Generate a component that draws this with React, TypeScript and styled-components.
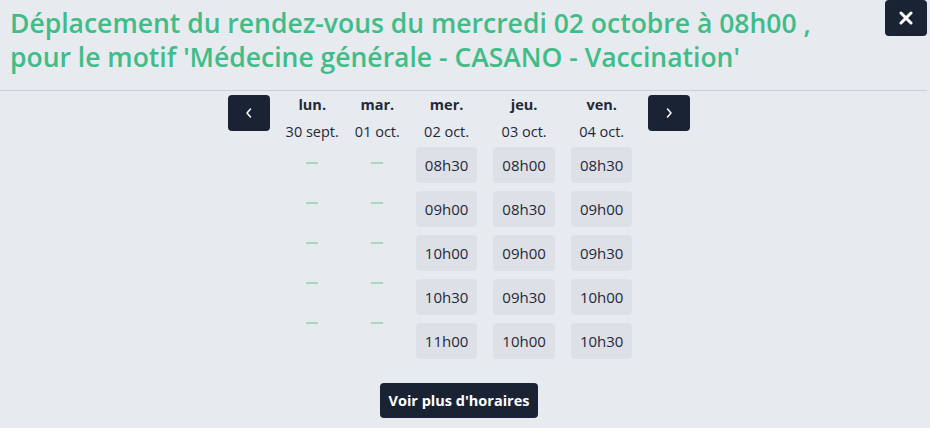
import React from "react";
import styled, { createGlobalStyle } from "styled-components";

const GlobalStyle = createGlobalStyle`
  html, body {
    margin: 0;
    padding: 0;
    background: #e7eaef;
  }
  body {
    font-family: "Open Sans", "Noto Sans", sans-serif;
    color: #1f2937;
  }
`;

const Page = styled.div`
  width: 930px;
  height: 428px;
  overflow: hidden;
  background: #e7eaef;
`;

const Header = styled.div`
  display: flex;
  justify-content: space-between;
  align-items: flex-start;
  height: 91px;
  width: 927px;
  border-bottom: 1px solid #c9ced7;
  box-sizing: border-box;
  padding-left: 10px;
`;

const Title = styled.h2`
  margin: 0;
  padding-top: 6px;
  font-size: 26.5px;
  line-height: 34px;
  font-weight: 600;
  color: #3fbd88;
  letter-spacing: 0;
`;

const DarkButton = styled.button`
  width: 42px;
  height: 36px;
  border: none;
  border-radius: 4px;
  background: #1a2334;
  color: #ffffff;
  display: flex;
  align-items: center;
  justify-content: center;
  padding: 0;
  cursor: pointer;
  flex-shrink: 0;
`;

const Body = styled.div`
  width: 918px;
  display: flex;
  flex-direction: column;
  align-items: center;
  padding-top: 4px;
`;

const Week = styled.div`
  display: flex;
  align-items: flex-start;
  gap: 16px;
`;

const Day = styled.div`
  display: flex;
  flex-direction: column;
  align-items: center;
`;

const DayName = styled.div`
  font-size: 14.5px;
  line-height: 20px;
  font-weight: 700;
  color: #1f2937;
`;

const DayDate = styled.div`
  font-size: 14.5px;
  line-height: 22px;
  margin-top: 6px;
  color: #1f2937;
  white-space: nowrap;
`;

const Slots = styled.div`
  display: flex;
  flex-direction: column;
  align-items: center;
  gap: 8px;
  margin-top: 4px;
`;

const Slot = styled.button`
  height: 36px;
  padding: 0 9px;
  border: none;
  border-radius: 4px;
  background: #dde0e6;
  font-family: "Open Sans", "Noto Sans", sans-serif;
  font-size: 15px;
  color: #1f2937;
  cursor: pointer;
`;

const Empty = styled.div`
  height: 32px;
  display: flex;
  align-items: center;
  &::after {
    content: "";
    width: 12px;
    height: 2px;
    background: #a3d9bf;
  }
`;

const More = styled.button`
  margin-top: 24px;
  height: 35px;
  padding: 0 9px;
  border: none;
  border-radius: 4px;
  background: #1a2334;
  color: #ffffff;
  font-family: "Open Sans", "Noto Sans", sans-serif;
  font-size: 14.5px;
  font-weight: 700;
  cursor: pointer;
`;

const days = [
  { name: "lun.", date: "30 sept.", slots: [] as string[] },
  { name: "mar.", date: "01 oct.", slots: [] as string[] },
  { name: "mer.", date: "02 oct.", slots: ["08h30", "09h00", "10h00", "10h30", "11h00"] },
  { name: "jeu.", date: "03 oct.", slots: ["08h00", "08h30", "09h00", "09h30", "10h00"] },
  { name: "ven.", date: "04 oct.", slots: ["08h30", "09h00", "09h30", "10h00", "10h30"] },
];

const Chevron = ({ dir }: { dir: "left" | "right" }) => (
  <svg width="12" height="12" viewBox="0 0 12 12" fill="none">
    <path
      d={dir === "left" ? "M7.5 2L4 6l3.5 4" : "M4.5 2L8 6l-3.5 4"}
      stroke="#fff"
      strokeWidth="1.5"
      strokeLinecap="round"
      strokeLinejoin="round"
    />
  </svg>
);

export default function App() {
  return (
    <Page>
      <GlobalStyle />
      <Header>
        <Title>
          Déplacement du rendez-vous du mercredi 02 octobre à 08h00 ,
          <br />
          pour le motif 'Médecine générale - CASANO - Vaccination'
        </Title>
        <DarkButton aria-label="Fermer">
          <svg width="14" height="14" viewBox="0 0 14 14">
            <path d="M2 2l10 10M12 2L2 12" stroke="#fff" strokeWidth="3" strokeLinecap="round" />
          </svg>
        </DarkButton>
      </Header>
      <Body>
        <Week>
          <DarkButton aria-label="Semaine précédente">
            <Chevron dir="left" />
          </DarkButton>
          {days.map((d) => (
            <Day key={d.name}>
              <DayName>{d.name}</DayName>
              <DayDate>{d.date}</DayDate>
              <Slots>
                {d.slots.length
                  ? d.slots.map((s) => <Slot key={s}>{s}</Slot>)
                  : [0, 1, 2, 3, 4].map((i) => <Empty key={i} />)}
              </Slots>
            </Day>
          ))}
          <DarkButton aria-label="Semaine suivante">
            <Chevron dir="right" />
          </DarkButton>
        </Week>
        <More>Voir plus d'horaires</More>
      </Body>
    </Page>
  );
}
